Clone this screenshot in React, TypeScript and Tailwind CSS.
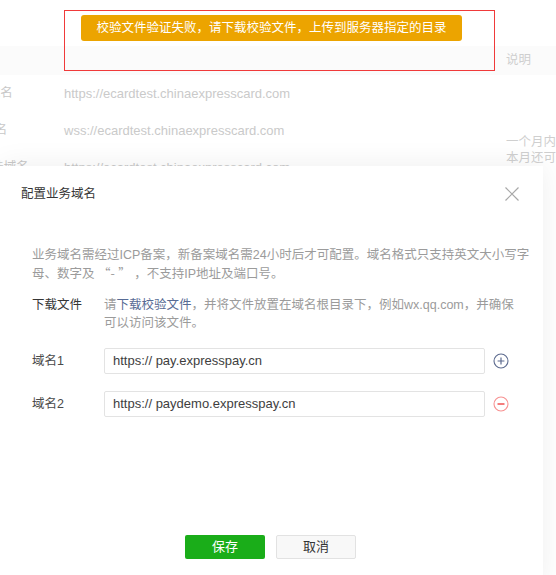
const FONT = "font-['Liberation_Sans','Noto_Sans_CJK_SC',sans-serif]";
const CJK = "font-['Noto_Sans_CJK_SC',sans-serif]";

const BG_ROWS = [
  { label: "request合法域名", value: "https://ecardtest.chinaexpresscard.com" },
  { label: "socket合法域名", value: "wss://ecardtest.chinaexpresscard.com" },
  { label: "uploadFile合法域名", value: "https://ecardtest.chinaexpresscard.com" },
];

function PlusIcon() {
  return (
    <svg width="16" height="16" viewBox="0 0 16 16" fill="none">
      <circle cx="8" cy="8" r="7" stroke="#5d6b8f" strokeWidth="1.1" />
      <path d="M8 4.6v6.8M4.6 8h6.8" stroke="#5d6b8f" strokeWidth="1.2" />
    </svg>
  );
}

function MinusIcon() {
  return (
    <svg width="16" height="16" viewBox="0 0 16 16" fill="none">
      <circle cx="8" cy="8" r="7" stroke="#f79191" strokeWidth="1.1" />
      <path d="M4.5 8h7" stroke="#f47c7c" strokeWidth="2" />
    </svg>
  );
}

function DomainRow({ label, value, action }: { label: string; value: string; action: "add" | "remove" }) {
  return (
    <div className="flex items-center">
      <span className="w-[72px] text-[12.5px] text-[#4a4a4a]">{label}</span>
      <div className="w-[381px] h-[26px] border border-[#e3e3e3] rounded-[2px] flex items-center pl-[8px] text-[13px] text-[#3e3e3e]">
        {value}
      </div>
      <span className="ml-[8px] flex">{action === "add" ? <PlusIcon /> : <MinusIcon />}</span>
    </div>
  );
}

export default function App() {
  return (
    <div className={`relative w-[556px] h-[575px] overflow-hidden bg-white ${FONT}`}>
      {/* 背景页面 */}
      <div className="pt-[46px]">
        <div className="h-[29px] bg-[#fbfbfb] flex items-center">
          <span className="ml-[506px] text-[12.5px] text-[#cfcfcf]">说明</span>
        </div>
        <div className="grid grid-cols-[143px_442px_1fr] ml-[-79px]">
          <div className="col-span-2 flex flex-col">
            {BG_ROWS.map((r) => (
              <div key={r.label} className="h-[37px] flex items-center">
                <span className="w-[143px] text-[12.5px] text-[#c8c8c8] whitespace-nowrap">{r.label}</span>
                <span className="text-[13px] text-[#cacaca] whitespace-nowrap">{r.value}</span>
              </div>
            ))}
          </div>
          <div className="pt-[59px] text-[12.5px] leading-[16px] text-[#cfcfcf] whitespace-nowrap">
            <p>一个月内可申请5次修改</p>
            <p>本月还可修改5次</p>
          </div>
        </div>
      </div>

      {/* 标注框 */}
      <div className="absolute left-[64px] top-[10px] w-[431px] h-[61px] border border-[#f03a3a]">
        <div className="mt-[4px] ml-[16px] w-[381px] h-[26px] rounded-[3px] bg-[#eca400] text-white text-[12.5px] flex items-center justify-center">
          校验文件验证失败，请下载校验文件，上传到服务器指定的目录
        </div>
      </div>

      {/* 弹窗 */}
      <div className="absolute left-0 top-[166px] w-[543px] h-[420px] bg-white shadow-[0_0_28px_rgba(0,0,0,0.07)] flex flex-col">
        <div className="h-[56px] flex items-center justify-between pl-[21px] pr-[24px]">
          <span className="text-[12.5px] text-[#353535]">配置业务域名</span>
          <svg width="14" height="14" viewBox="0 0 14 14" fill="none">
            <path d="M0.5 0.5l13 13M13.5 0.5l-13 13" stroke="#a8a8a8" strokeWidth="1.2" />
          </svg>
        </div>

        <div className="pl-[32px] pt-[24px] flex flex-col">
          <p className="text-[12.5px] leading-[18px] text-[#9b9b9b] whitespace-nowrap">
            业务域名需经过ICP备案，新备案域名需24小时后才可配置。域名格式只支持英文大小写字
            <br />
            母、数字及 <span className={CJK}>“-</span> <span className={CJK}>”</span> ，不支持IP地址及端口号。
          </p>

          <div className="flex mt-[13px] text-[12.5px] leading-[18px]">
            <span className="w-[72px] text-[#353535]">下载文件</span>
            <p className="text-[#9b9b9b] whitespace-nowrap">
              请<span className="text-[#576b95]">下载校验文件</span>，并将文件放置在域名根目录下，例如wx.qq.com，并确保
              <br />
              可以访问该文件。
            </p>
          </div>

          <div className="flex flex-col gap-[17px] mt-[16px]">
            <DomainRow label="域名1" value="https:// pay.expresspay.cn" action="add" />
            <DomainRow label="域名2" value="https:// paydemo.expresspay.cn" action="remove" />
          </div>
        </div>

        <div className="flex justify-center gap-[11px] mt-[118px] pr-[2px]">
          <button className="w-[80px] h-[24px] rounded-[2px] bg-[#1aad19] text-white text-[13px]">保存</button>
          <button className="w-[80px] h-[24px] rounded-[2px] bg-[#f8f8f8] border border-[#e2e2e2] text-[#353535] text-[13px]">
            取消
          </button>
        </div>
      </div>
    </div>
  );
}
